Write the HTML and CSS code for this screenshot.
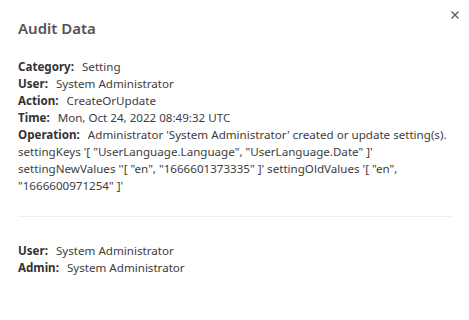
FILE: index.html
```html
<!DOCTYPE html>
<html>
<head>
<meta charset="utf-8">
<link rel="stylesheet" href="styles.css">
</head>
<body>
<div class="modal">
  <button class="close" aria-label="Close">
    <svg width="8" height="8" viewBox="0 0 8 8"><path d="M0.5 0.5L7.5 7.5M7.5 0.5L0.5 7.5" stroke="#555" stroke-width="1.2"/></svg>
  </button>
  <h2 class="title">Audit Data</h2>
  <div class="section">
    <div class="row"><b>Category:</b> Setting</div>
    <div class="row"><b>User:</b> System Administrator</div>
    <div class="row"><b>Action:</b> CreateOrUpdate</div>
    <div class="row"><b>Time:</b> Mon, Oct 24, 2022 08:49:32 UTC</div>
    <div class="row"><b>Operation:</b> Administrator 'System Administrator' created or update setting(s). settingKeys '[ "UserLanguage.Language", "UserLanguage.Date" ]' settingNewValues ''[ "en", "1666601373335" ]' settingOldValues '[ "en", "1666600971254" ]'</div>
  </div>
  <hr class="sep">
  <div class="section">
    <div class="row"><b>User:</b> System Administrator</div>
    <div class="row"><b>Admin:</b> System Administrator</div>
  </div>
</div>
</body>
</html>
```
FILE: styles.css
```css
html, body { margin: 0; padding: 0; background: #fff; }
body { font-family: "Noto Sans", "Open Sans", sans-serif; color: #3d3d3d; }
.modal { position: relative; padding: 16px 18px 18px 18px; }
.close { position: absolute; top: 11px; right: 10px; border: 0; background: none; padding: 0; width: 8px; height: 8px; display: flex; }
.title { margin: 0 0 18px 0; font-size: 15px; font-weight: 600; color: #555; line-height: 24px; }
.section { font-size: 11.6px; line-height: 17px; }
.row b { font-weight: 700; margin-right: 5px; color: #333; }
.sep { border: 0; border-top: 1px solid #eee; margin: 22px 0 25px 0; }
```
